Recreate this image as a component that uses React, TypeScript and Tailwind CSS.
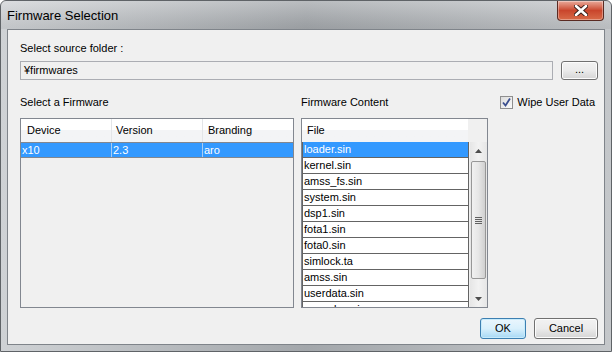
const files = [
  "loader.sin",
  "kernel.sin",
  "amss_fs.sin",
  "system.sin",
  "dsp1.sin",
  "fota1.sin",
  "fota0.sin",
  "simlock.ta",
  "amss.sin",
  "userdata.sin",
  "apps_log.sin",
];

const font = { fontFamily: '"Liberation Sans", Arial, sans-serif' };

function CloseButton() {
  return (
    <div className="mr-[7px] flex h-[20px] w-[47px] items-center justify-center rounded-b-[4px] border border-t-0 border-[#5a2a22] bg-gradient-to-b from-[#e8a99a] via-[#c9452c] to-[#d86a48] shadow-[inset_0_0_0_1px_rgba(255,255,255,0.35)]">
      <svg width="14" height="11" viewBox="0 0 14 11">
        <path d="M2 1 L12 10 M12 1 L2 10" stroke="#3a1f1a" strokeWidth="4.5" strokeLinecap="round" />
        <path d="M2 1 L12 10 M12 1 L2 10" stroke="#ffffff" strokeWidth="2.6" strokeLinecap="round" />
      </svg>
    </div>
  );
}

function WinButton({ label, w, primary }: { label: string; w: string; primary?: boolean }) {
  return (
    <div
      className={`flex h-[21px] ${w} items-center justify-center rounded-[3px] border text-[11px] text-black ${
        primary
          ? "border-[#3c7fb1] bg-gradient-to-b from-[#eaf6fd] via-[#d9f0fc] to-[#a7d9f5] shadow-[inset_0_0_0_1px_#c8ebfb]"
          : "border-[#707070] bg-gradient-to-b from-[#f2f2f2] via-[#ebebeb] to-[#d5d5d5] shadow-[inset_0_0_0_1px_#fcfcfc]"
      }`}
    >
      {label}
    </div>
  );
}

function ScrollBar() {
  return (
    <div className="flex h-full w-[17px] flex-col bg-gradient-to-r from-[#e6e6e6] via-[#f2f2f2] to-[#e6e6e6]">
      <div className="flex h-[17px] items-center justify-center">
        <svg width="7" height="4" viewBox="0 0 7 4">
          <path d="M0 4 L3.5 0 L7 4 Z" fill="#4d4d4d" />
        </svg>
      </div>
      <div className="mx-[1px] mt-[2px] flex h-[118px] items-center justify-center rounded-[2px] border border-[#979797] bg-gradient-to-r from-[#f1f1f1] via-[#e6e6e6] to-[#d0d0d0]">
        <div className="flex flex-col gap-[1px]">
          <div className="h-[1px] w-[7px] bg-[#606060]" />
          <div className="h-[1px] w-[7px] bg-[#606060]" />
          <div className="h-[1px] w-[7px] bg-[#606060]" />
          <div className="h-[1px] w-[7px] bg-[#606060]" />
        </div>
      </div>
      <div className="mt-auto flex h-[17px] items-center justify-center">
        <svg width="7" height="4" viewBox="0 0 7 4">
          <path d="M0 0 L3.5 4 L7 0 Z" fill="#4d4d4d" />
        </svg>
      </div>
    </div>
  );
}

export default function App() {
  return (
    <div
      className="flex h-[352px] w-[612px] flex-col overflow-hidden rounded-t-[6px] border border-[#5f6367] bg-gradient-to-r from-[#cfd2d5] via-[#a3a7ab] to-[#c4c7ca] text-black"
      style={font}
    >
      {/* title bar */}
      <div className="flex h-[28px] items-start bg-gradient-to-b from-white/25 to-black/5">
        <span className="ml-[6px] mt-[7px] text-[13px] leading-[15px] text-black">Firmware Selection</span>
        <div className="ml-auto">
          <CloseButton />
        </div>
      </div>

      {/* client */}
      <div className="mx-[6px] h-[316px] border border-[#7f848a] bg-[#f0f0f0] pl-[12px] pr-[6px] text-[11px]">
        <div className="mt-[12px] h-[13px] leading-[13px]">Select source folder :</div>

        <div className="mt-[6px] flex h-[19px]">
          <div className="flex w-[533px] items-center border border-[#abadb3] pl-[3px] leading-none">
            ¥firmwares
          </div>
          <div className="ml-auto">
            <div className="flex h-[19px] w-[37px] items-center justify-center rounded-[3px] border border-[#707070] bg-gradient-to-b from-[#f2f2f2] via-[#ebebeb] to-[#d5d5d5] pb-[3px] shadow-[inset_0_0_0_1px_#fcfcfc]">
              ...
            </div>
          </div>
        </div>

        <div className="mt-[15px] flex h-[14px] items-center">
          <span className="w-[281px]">Select a Firmware</span>
          <span>Firmware Content</span>
          <div className="ml-auto mr-[3px] flex items-center">
            <div className="flex h-[13px] w-[13px] items-center justify-center border border-[#8f8f8f] bg-gradient-to-br from-[#dcdcdc] to-[#fbfbfb]">
              <svg width="9" height="9" viewBox="0 0 9 9">
                <path d="M1 4.5 L3.5 7.5 L8 0.5" stroke="#3b4f8f" strokeWidth="1.8" fill="none" />
              </svg>
            </div>
            <span className="ml-[4px]">Wipe User Data</span>
          </div>
        </div>

        <div className="mt-[9px] flex h-[190px]">
          {/* firmware table */}
          <div className="h-full w-[274px] border border-[#828790] bg-[#f0f0f0]">
            <div className="flex h-[23px] bg-gradient-to-b from-white from-50% to-[#f3f4f6] to-50%">
              <div className="flex w-[91px] items-center border-r border-[#e3e5e8] pl-[6px]">Device</div>
              <div className="flex w-[91px] items-center border-r border-[#e3e5e8] pl-[4px]">Version</div>
              <div className="flex flex-1 items-center pl-[5px]">Branding</div>
            </div>
            <div className="flex h-[16px] border-y border-[#828790] bg-[#3399ff] text-white">
              <div className="flex w-[91px] items-center border-r border-[#a8cdf4] pl-[1px]">x10</div>
              <div className="flex w-[91px] items-center border-r border-[#a8cdf4] pl-[1px]">2.3</div>
              <div className="flex flex-1 items-center pl-[1px]">aro</div>
            </div>
          </div>

          {/* firmware content */}
          <div className="ml-[7px] flex h-full w-[187px] flex-col border border-[#828790] bg-[#f0f0f0]">
            <div className="flex h-[23px]">
              <div className="flex w-[166px] items-center bg-gradient-to-b from-white from-50% to-[#f3f4f6] to-50% pl-[5px]">
                File
              </div>
            </div>
            <div className="flex min-h-0 flex-1">
              <div className="w-[167px] overflow-hidden">
                {files.map((f, i) => (
                  <div
                    key={f}
                    className={`flex h-[16px] items-center border border-t-0 border-[#646464] pl-[1px] leading-none ${
                      i === 0 ? "border-t bg-[#3399ff] text-white" : "bg-white"
                    }`}
                  >
                    {f}
                  </div>
                ))}
              </div>
              <div className="ml-auto h-full">
                <ScrollBar />
              </div>
            </div>
          </div>
        </div>

        <div className="mt-[10px] flex justify-end gap-[8px]">
          <WinButton label="OK" w="w-[46px]" primary />
          <WinButton label="Cancel" w="w-[64px]" />
        </div>
      </div>
    </div>
  );
}
